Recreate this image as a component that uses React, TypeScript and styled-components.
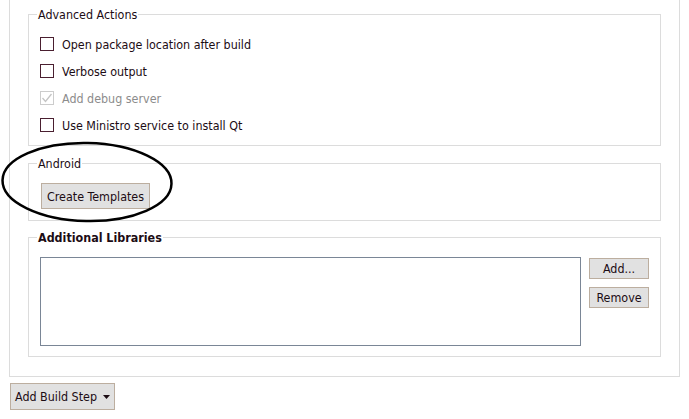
import styled, { createGlobalStyle } from "styled-components";

const GlobalStyle = createGlobalStyle`
    *, *::before, *::after {
        box-sizing: border-box;
    }
    html, body {
        margin: 0;
        padding: 0;
        background: #ffffff;
    }
    body {
        font-family: "DejaVu Sans Condensed", "DejaVu Sans", sans-serif;
        font-stretch: semi-condensed;
        font-size: 12.4px;
        color: #1c0c14;
    }
`;

const Page = styled.div`
    position: relative;
    width: 689px;
    height: 419px;
    overflow: hidden;
`;

const StepFrame = styled.div`
    margin-left: 9px;
    width: 671px;
    border: 1px solid #dcdcdc;
    border-top: none;
    padding: 7px 18px 19px 18px;
    display: flex;
    flex-direction: column;
`;

const Group = styled.fieldset<{ $space?: number }>`
    margin: ${(p) => p.$space ?? 0}px 0 0 0;
    border: 1px solid #dcdcdc;
    padding: 0 8px;
    min-width: 0;
`;

const Legend = styled.legend<{ $bold?: boolean }>`
    padding: 0 1px;
    line-height: 15px;
    font-weight: ${(p) => (p.$bold ? "bold" : "normal")};
`;

const CheckList = styled.div`
    display: flex;
    flex-direction: column;
    gap: 7px;
    padding: 12px 0 10px 3px;
`;

const CheckRow = styled.label<{ $disabled?: boolean }>`
    display: flex;
    align-items: center;
    gap: 8px;
    height: 20px;
    color: ${(p) => (p.$disabled ? "#8c8c8c" : "inherit")};
`;

const Box = styled.span<{ $disabled?: boolean }>`
    width: 14px;
    height: 14px;
    border: 1px solid ${(p) => (p.$disabled ? "#cccccc" : "#4a1f30")};
    background: #ffffff;
    display: flex;
    align-items: center;
    justify-content: center;
`;

const Button = styled.button<{ $w: number; $h: number }>`
    width: ${(p) => p.$w}px;
    height: ${(p) => p.$h}px;
    padding: 0;
    border: 1px solid #bcae9f;
    background: #e1e1e1;
    font-family: inherit;
    font-stretch: inherit;
    font-size: 12.4px;
    color: #1c0c14;
    display: flex;
    align-items: center;
    justify-content: center;
    gap: 6px;
`;

const AndroidBody = styled.div`
    padding: 12px 0 11px 4px;
`;

const LibBody = styled.div`
    display: flex;
    gap: 8px;
    padding: 12px 0 10px 3px;
`;

const ListBox = styled.div`
    width: 541px;
    height: 89px;
    border: 1px solid #7a8696;
    background: #ffffff;
`;

const SideButtons = styled.div`
    display: flex;
    flex-direction: column;
    gap: 8px;
    padding-top: 1px;
`;

const Footer = styled.div`
    padding: 6px 0 0 10px;
`;

const Annotation = styled.svg`
    position: absolute;
    left: 0;
    top: 140px;
    pointer-events: none;
`;

function Check({ label, checked, disabled }: { label: string; checked?: boolean; disabled?: boolean }) {
    return (
        <CheckRow $disabled={disabled}>
            <Box $disabled={disabled}>
                {checked && (
                    <svg width="12" height="12" viewBox="0 0 12 12">
                        <polyline points="1.5,6 4.5,9.5 10.5,2" fill="none" stroke="#c4c4c4" strokeWidth="1.3" />
                    </svg>
                )}
            </Box>
            {label}
        </CheckRow>
    );
}

export default function App() {
    return (
        <Page>
            <GlobalStyle />
            <StepFrame>
                <Group>
                    <Legend>Advanced Actions</Legend>
                    <CheckList>
                        <Check label="Open package location after build" />
                        <Check label="Verbose output" />
                        <Check label="Add debug server" checked disabled />
                        <Check label="Use Ministro service to install Qt" />
                    </CheckList>
                </Group>
                <Group $space={10}>
                    <Legend>Android</Legend>
                    <AndroidBody>
                        <Button $w={109} $h={26}>Create Templates</Button>
                    </AndroidBody>
                </Group>
                <Group $space={9}>
                    <Legend $bold>Additional Libraries</Legend>
                    <LibBody>
                        <ListBox />
                        <SideButtons>
                            <Button $w={60} $h={21}>Add...</Button>
                            <Button $w={60} $h={21}>Remove</Button>
                        </SideButtons>
                    </LibBody>
                </Group>
            </StepFrame>
            <Footer>
                <Button $w={105} $h={27}>
                    Add Build Step
                    <svg width="7" height="4" viewBox="0 0 7 4">
                        <polygon points="0,0 7,0 3.5,4" fill="#1c0c14" />
                    </svg>
                </Button>
            </Footer>
            <Annotation width="180" height="90" viewBox="0 0 180 90">
                <ellipse cx="87" cy="42" rx="84.5" ry="39" fill="none" stroke="#000" strokeWidth="2.5" transform="rotate(1.2 87 42)" />
            </Annotation>
        </Page>
    );
}
